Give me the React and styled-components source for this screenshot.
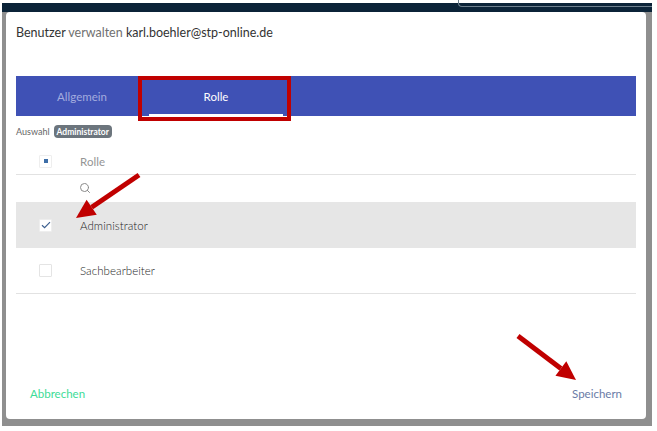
import React from 'react';
import styled, { createGlobalStyle } from 'styled-components';
import { Search } from 'lucide-react';

const Global = createGlobalStyle`
  html, body {
    margin: 0;
    padding: 0;
    background: #fff;
    font-family: 'Lato', 'Open Sans', sans-serif;
  }
`;

const Page = styled.div`
  position: relative;
  width: 657px;
  height: 431px;
  overflow: hidden;
  padding: 3px 5px 5px 2px;
  box-sizing: border-box;
`;

const Backdrop = styled.div`
  position: relative;
  height: 100%;
  background: #8f8f8f;
  padding: 9px 6px 7px 4px;
  box-sizing: border-box;
`;

const TopBar = styled.div`
  position: absolute;
  top: 0;
  left: 0;
  right: 0;
  height: 9px;
  background: #0b2338;
`;

const SearchOutline = styled.div`
  position: absolute;
  top: -4px;
  left: 456px;
  right: 0;
  height: 8px;
  box-sizing: border-box;
  border-left: 1px solid #6d7f8d;
  border-bottom: 1px solid #6d7f8d;
  border-bottom-left-radius: 4px;
`;

const Modal = styled.div`
  position: relative;
  height: 100%;
  background: #fff;
  border-radius: 4px;
  display: flex;
  flex-direction: column;
  padding: 0 10px;
  box-sizing: border-box;
`;

const Title = styled.h1`
  margin: 0;
  padding: 13px 0 0;
  height: 64px;
  box-sizing: border-box;
  font-size: 12.5px;
  line-height: 15px;
  font-weight: 400;
  color: #333;
`;

const TitleMuted = styled.span`
  color: #707070;
`;

const Tabs = styled.div`
  display: flex;
  height: 40px;
  background: #3f51b5;
`;

const Tab = styled.div`
  position: relative;
  width: ${p => p.$width}px;
  display: flex;
  align-items: center;
  justify-content: center;
  font-size: 11.5px;
  color: ${p => (p.$active ? '#fff' : '#a3acdf')};
  &::after {
    content: '';
    display: ${p => (p.$active ? 'block' : 'none')};
    position: absolute;
    left: 1px;
    right: 1px;
    bottom: 0;
    height: 2px;
    background: #fff;
  }
`;

const Selection = styled.div`
  display: flex;
  align-items: center;
  gap: 4px;
  height: 13px;
  margin-top: 9px;
  font-size: 9px;
  color: #666;
`;

const Badge = styled.span`
  display: inline-flex;
  align-items: center;
  height: 13px;
  padding: 0 3px;
  border-radius: 4px;
  background: #6c757d;
  color: #fff;
  font-size: 8.5px;
  font-weight: 700;
`;

const Row = styled.div`
  display: flex;
  align-items: center;
  height: ${p => p.$height}px;
  padding-top: ${p => p.$offset || 0}px;
  background: ${p => (p.$selected ? '#e6e6e6' : 'transparent')};
  border-bottom: ${p => (p.$line ? '1px solid #e2e2e2' : 'none')};
  box-sizing: border-box;
  font-size: 11.5px;
  font-weight: ${p => (p.$muted ? 400 : 300)};
  letter-spacing: 0.05px;
  color: ${p => (p.$muted ? '#959595' : '#1c1c1c')};
`;

const CheckCell = styled.div`
  width: 64px;
  padding-left: 23px;
  box-sizing: border-box;
  flex: none;
`;

const CheckBox = styled.div`
  width: 13px;
  height: 13px;
  box-sizing: border-box;
  background: #fff;
  border: 1px solid ${p => (p.$plain ? '#e4e4e4' : '#eeeeee')};
  border-radius: 1px;
  display: flex;
  align-items: center;
  justify-content: center;
`;

const Dot = styled.div`
  width: 4px;
  height: 4px;
  background: #3d6ea8;
`;

const SearchIcon = styled(Search)`
  color: #8a8a8a;
  display: block;
  margin: -2px 0 0 -1px;
`;

const Spacer = styled.div`
  flex: 1;
`;

const Footer = styled.div`
  display: flex;
  justify-content: space-between;
  padding: 0 14px 18px;
  font-size: 11.5px;
  line-height: 14px;
`;

const FooterButton = styled.span`
  color: ${p => p.$color};
`;

const TabHighlight = styled.div`
  position: absolute;
  left: 132px;
  top: 64px;
  width: 153px;
  height: 45px;
  box-sizing: border-box;
  border: 4px solid #c00000;
`;

const Arrows = styled.svg`
  position: absolute;
  left: 0;
  top: 0;
  pointer-events: none;
`;

function Arrow({ x1, y1, x2, y2 }) {
  // shaft stops short of the tip, the head is a filled triangle
  const angle = Math.atan2(y2 - y1, x2 - x1);
  const head = 19;
  const spread = 9;
  const bx = x2 - Math.cos(angle) * head;
  const by = y2 - Math.sin(angle) * head;
  const nx = -Math.sin(angle) * spread;
  const ny = Math.cos(angle) * spread;
  return (
    <g>
      <line x1={x1} y1={y1} x2={bx} y2={by} stroke="#c00000" strokeWidth="5" />
      <polygon points={`${x2},${y2} ${bx + nx},${by + ny} ${bx - nx},${by - ny}`} fill="#c00000" />
    </g>
  );
}

export default function App() {
  return (
    <Page>
      <Global />
      <Backdrop>
        <TopBar>
          <SearchOutline />
        </TopBar>
        <Modal>
          <Title>
            Benutzer <TitleMuted>verwalten</TitleMuted> karl.boehler@stp-online.de
          </Title>
          <Tabs>
            <Tab $width={132}>Allgemein</Tab>
            <Tab $width={136} $active>Rolle</Tab>
          </Tabs>
          <Selection>
            Auswahl <Badge>Administrator</Badge>
          </Selection>
          <Row $height={37} $offset={10} $line $muted>
            <CheckCell>
              <CheckBox><Dot /></CheckBox>
            </CheckCell>
            Rolle
          </Row>
          <Row $height={27}>
            <CheckCell />
            <SearchIcon size={12} strokeWidth={2} />
          </Row>
          <Row $height={46} $selected>
            <CheckCell>
              <CheckBox>
                <svg width="10" height="8" viewBox="0 0 10 8">
                  <path d="M1 4.2 L3.6 6.6 L9 1.2" fill="none" stroke="#3d5f8f" strokeWidth="1.2" />
                </svg>
              </CheckBox>
            </CheckCell>
            Administrator
          </Row>
          <Row $height={46} $line>
            <CheckCell>
              <CheckBox $plain />
            </CheckCell>
            Sachbearbeiter
          </Row>
          <Spacer />
          <Footer>
            <FooterButton $color="#3ddc97">Abbrechen</FooterButton>
            <FooterButton $color="#6a7ba6">Speichern</FooterButton>
          </Footer>
          <TabHighlight />
        </Modal>
      </Backdrop>
      <Arrows width="657" height="431">
        <Arrow x1={139} y1={175} x2={76} y2={218} />
        <Arrow x1={518} y1={336} x2={576} y2={380} />
      </Arrows>
    </Page>
  );
}
